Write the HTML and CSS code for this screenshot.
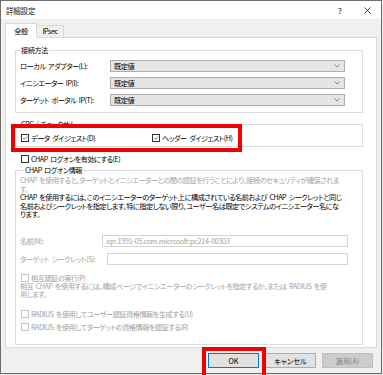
FILE: index.html
```html
<!DOCTYPE html>
<html lang="ja">
<head>
  <meta charset="UTF-8" />
  <title>詳細設定</title>
  <link rel="stylesheet" href="styles.css">
</head>
<body>
  <div class="window">
    <div class="titlebar">
      <span class="title">詳細設定</span>
      <span class="help">?</span>
      <span class="close">
        <svg viewBox="0 0 8 8" aria-hidden="true">
          <path d="M0.5 0.5L7.5 7.5M7.5 0.5L0.5 7.5"/>
        </svg>
      </span>
    </div>

    <div class="dialog">
      <div class="tabs">
        <div class="tab active">全般</div>
        <div class="tab">IPsec</div>
      </div>

      <div class="panel">
        <fieldset class="group group-conn">
          <legend>接続方法</legend>
          <div class="field-row">
            <span>ローカル アダプター(L):</span>
            <div class="select">既定値
              <svg viewBox="0 0 6 4" aria-hidden="true"><path d="M0.5 0.5L3 3L5.5 0.5"/></svg>
            </div>
          </div>
          <div class="field-row">
            <span>イニシエーター IP(I):</span>
            <div class="select">既定値
              <svg viewBox="0 0 6 4" aria-hidden="true"><path d="M0.5 0.5L3 3L5.5 0.5"/></svg>
            </div>
          </div>
          <div class="field-row">
            <span>ターゲット ポータル IP(T):</span>
            <div class="select">既定値
              <svg viewBox="0 0 6 4" aria-hidden="true"><path d="M0.5 0.5L3 3L5.5 0.5"/></svg>
            </div>
          </div>
        </fieldset>

        <fieldset class="group group-crc">
          <legend>CRC / チェックサム</legend>
          <div class="check-line">
            <label class="check check-wide">
              <span class="box"><svg viewBox="0 0 8 8" aria-hidden="true"><path d="M1.5 4L3.2 5.7L6.5 2.2"/></svg></span>データ ダイジェスト(D)
            </label>
            <label class="check">
              <span class="box"><svg viewBox="0 0 8 8" aria-hidden="true"><path d="M1.5 4L3.2 5.7L6.5 2.2"/></svg></span>ヘッダー ダイジェスト(H)
            </label>
          </div>
        </fieldset>

        <label class="check chap-enable"><span class="box"></span>CHAP ログオンを有効にする(E)</label>

        <fieldset class="group group-chap">
          <legend>CHAP ログオン情報</legend>
          <p class="note muted">CHAP を使用すると、ターゲットとイニシエーターとの間の認証を行うことにより、接続のセキュリティが確保されま<br>す。</p>
          <p class="note">CHAP を使用するには、このイニシエーターのターゲット上に構成されている名前および CHAP シークレットと同じ<br>名前およびシークレットを指定します。特に指定しない限り、ユーザー名は既定でシステムのイニシエーター名にな<br>ります。</p>

          <div class="input-row name-row">
            <span class="muted">名前(N):</span>
            <div class="input muted">iqn.1991-05.com.microsoft:pc214-00303</div>
          </div>
          <div class="input-row secret-row">
            <span class="muted">ターゲット シークレット(S):</span>
            <div class="input"></div>
          </div>

          <label class="check off mutual"><span class="box"></span>相互認証の実行(P)</label>
          <p class="note note-mutual muted">相互 CHAP を使用するには、構成ページでイニシエーターのシークレットを指定するか、または RADIUS を使<br>用します。</p>

          <label class="check off radius-1"><span class="box"></span>RADIUS を使用してユーザー認証資格情報を生成する(U)</label>
          <label class="check off radius-2"><span class="box"></span>RADIUS を使用してターゲットの資格情報を認証する(R)</label>
        </fieldset>
      </div>

      <div class="buttons">
        <button class="btn default">OK</button>
        <button class="btn">キャンセル</button>
        <button class="btn" disabled>適用(A)</button>
      </div>
    </div>

    <div class="mark mark-crc"></div>
    <div class="mark mark-ok"></div>
  </div>
</body>
</html>
```

FILE: styles.css
```css
*, *::before, *::after {
  box-sizing: border-box;
}
html, body {
  margin: 0;
}
body {
  width: 383px;
  height: 375px;
  overflow: hidden;
  background: #e6e6e6;
  font-family: "Noto Sans CJK JP", "Noto Sans", sans-serif;
  font-size: 7.2px;
  letter-spacing: -0.5px;
  word-spacing: 1.3px;
  font-feature-settings: "palt";
  color: #000;
}

.window {
  position: relative;
  width: 382px;
  height: 374px;
  border: 1px solid #6e6e6e;
  background: #f0f0f0;
}

/* title bar */
.titlebar {
  height: 18px;
  background: #fff;
  display: flex;
  align-items: center;
  padding: 0 9px 0 5px;
}
.title {
  flex: 1;
  font-size: 7.5px;
  letter-spacing: -0.2px;
  color: #1a1a1a;
}
.help {
  width: 10px;
  text-align: center;
  font-size: 8px;
  letter-spacing: 0;
  margin-right: 17px;
}
.close {
  width: 10px;
  display: flex;
  justify-content: center;
}
.close svg {
  width: 7px;
  height: 7px;
  stroke: #111;
  stroke-width: 0.9;
}

/* tabs + page */
.dialog {
  padding: 4px 0 0 4px;
}
.tabs {
  position: relative;
  z-index: 1;
  display: flex;
  align-items: flex-end;
  height: 15px;
  margin-bottom: -1px;
}
.tab {
  width: 28px;
  height: 12px;
  margin: 0 0 1px -1px;
  border: 1px solid #d9d9d9;
  border-bottom: none;
  background: #f0f0f0;
  text-align: center;
  line-height: 11px;
}
.tab.active {
  width: 32px;
  height: 15px;
  margin: 0;
  background: #fff;
  line-height: 14px;
}

.panel {
  width: 372px;
  height: 311px;
  border: 1px solid #d9d9d9;
  background: #fff;
  overflow: hidden;
}

/* group boxes */
.group {
  min-width: 0;
  margin: 0 13px 0 9px;
  padding: 0 4px;
  border: 1px solid #dcdcdc;
}
.group legend {
  padding: 0 1px;
  line-height: 10px;
}
.group-conn {
  margin-top: 7px;
  padding-top: 5px;
  padding-bottom: 6px;
}
.group-crc {
  margin-top: 6px;
  padding: 4px 0 3px 5px;
}
.group-crc legend {
  margin-left: -1px;
}
.group-chap {
  margin-top: 1px;
  padding-top: 1px;
  padding-bottom: 12px;
}
.group-chap legend {
  margin-left: 4px;
}

.field-row {
  display: grid;
  grid-template-columns: 90px 235px;
  align-items: center;
  height: 12px;
}
.field-row + .field-row {
  margin-top: 5px;
}
.select {
  height: 12px;
  display: flex;
  align-items: center;
  justify-content: space-between;
  padding: 0 4px 0 3px;
  background: #e5e5e5;
  border: 1px solid #adadad;
  line-height: 10px;
}
.select svg {
  width: 6px;
  height: 4px;
  fill: none;
  stroke: #6d6d6d;
  stroke-width: 0.8;
}

/* checkboxes */
.check-line {
  display: flex;
  height: 10px;
  align-items: center;
}
.check {
  display: flex;
  align-items: center;
  height: 10px;
  white-space: nowrap;
}
.check-wide {
  width: 131px;
}
.box {
  width: 8px;
  height: 8px;
  margin-right: 2px;
  border: 1px solid #333;
  background: #fff;
  display: flex;
}
.box svg {
  width: 6px;
  height: 6px;
  fill: none;
  stroke: #222;
  stroke-width: 0.9;
}
.check.off {
  color: #a0a0a0;
}
.check.off .box {
  border-color: #c4c4c4;
}
.chap-enable {
  margin: 7px 0 0 15px;
}

/* CHAP text */
.note {
  margin: 0;
  line-height: 8.5px;
  white-space: nowrap;
}
.muted {
  color: #a3a3a3;
}
.note-mutual {
  line-height: 8px;
}

.input-row {
  display: flex;
  align-items: center;
  height: 12px;
}
.input {
  flex: 1;
  height: 12px;
  margin-right: 10px;
  padding-left: 3px;
  border: 1px solid #d4d4d4;
  line-height: 10px;
  letter-spacing: -0.3px;
}
.name-row {
  margin-top: 16.5px;
}
.name-row > span {
  width: 82px;
}
.secret-row {
  margin-top: 6px;
}
.secret-row > span {
  width: 87px;
}
.mutual {
  height: 8px;
  margin: 9px 0 0 1px;
}
.radius-1 {
  margin: 11px 0 0 1px;
}
.radius-2 {
  margin: 3px 0 0 1px;
}

/* dialog buttons */
.buttons {
  display: flex;
  justify-content: flex-end;
  gap: 6px;
  margin-top: 5px;
  padding-right: 8px;
}
.btn {
  width: 51px;
  height: 15px;
  padding: 0;
  border: 1px solid #adadad;
  background: #e1e1e1;
  font: inherit;
  color: #000;
}
.btn.default {
  border-color: #0078d7;
}
.btn:disabled {
  background: #cccccc;
  border-color: #bfbfbf;
  color: #838383;
}

/* red annotation frames */
.mark {
  position: absolute;
  border: 4px solid #f00000;
}
.mark-crc {
  left: 10px;
  top: 123px;
  width: 231px;
  height: 28px;
}
.mark-ok {
  left: 201px;
  top: 346px;
  width: 64px;
  height: 34px;
}
```
